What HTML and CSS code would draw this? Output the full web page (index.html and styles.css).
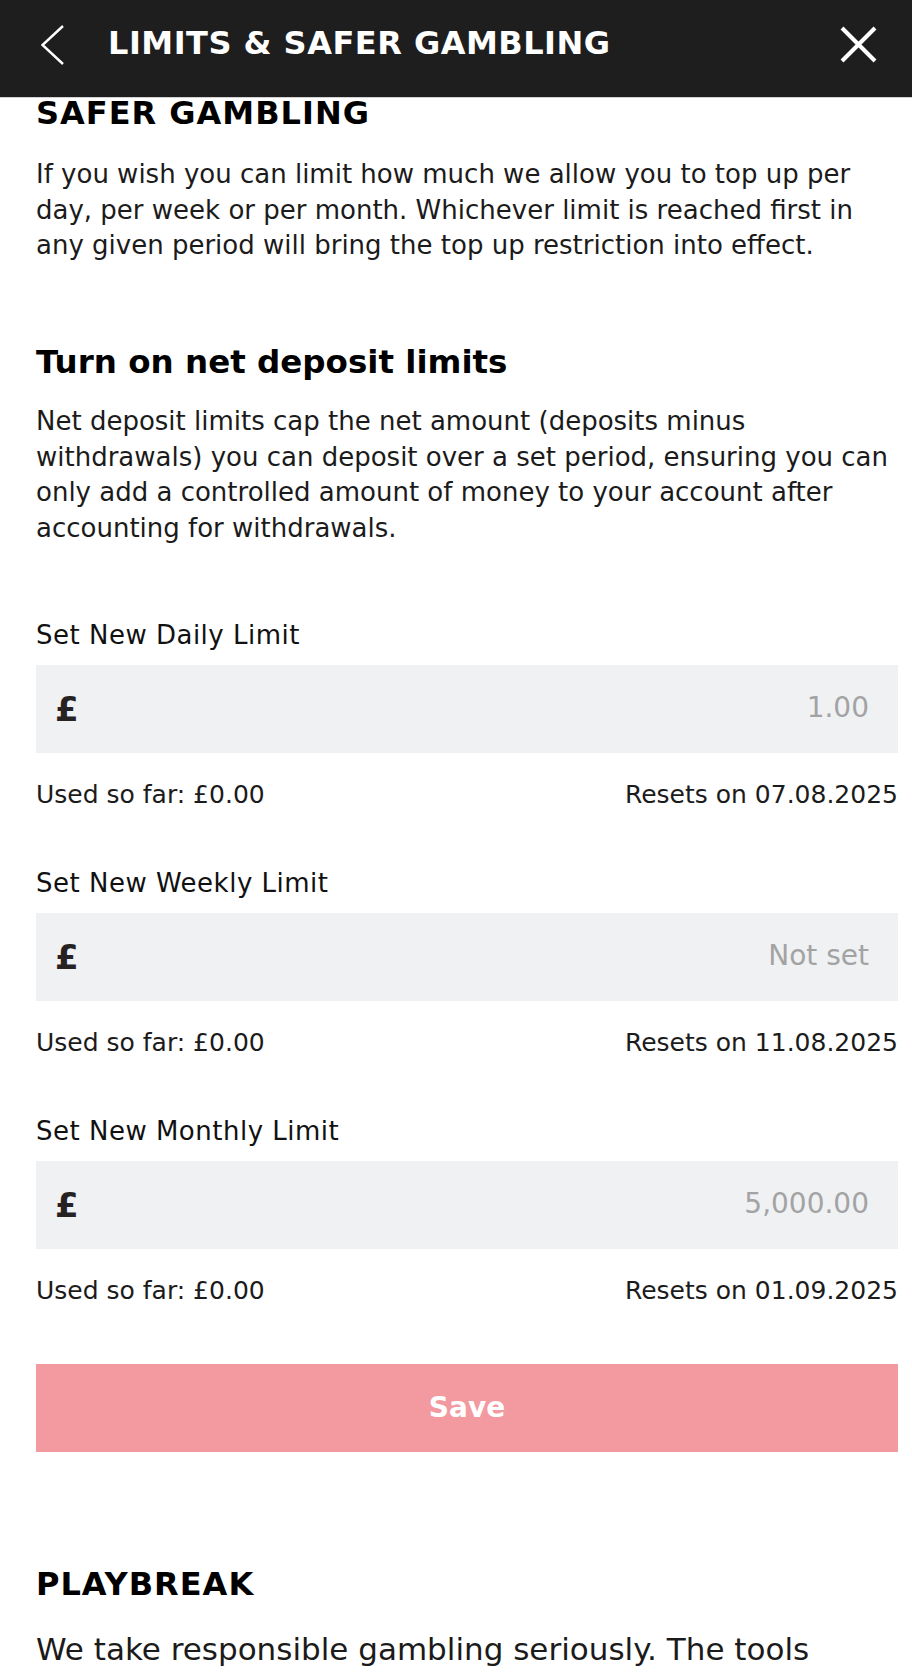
FILE: index.html
```html
<!DOCTYPE html>
<html lang="en">
<head>
    <meta charset="UTF-8">
    <meta name="viewport" content="width=device-width, initial-scale=1.0">
    <title>Limits &amp; Safer Gambling</title>
    <link rel="stylesheet" href="styles.css">
</head>
<body>

<header class="topbar">
    <a class="back" href="#" aria-label="Back">
        <svg width="23" height="40" viewBox="0 0 23 40">
            <polyline points="22,1 1.5,20 22,39" fill="none" stroke="#fff" stroke-width="2.4"/>
        </svg>
    </a>
    <h1>LIMITS &amp; SAFER GAMBLING</h1>
    <a class="close" href="#" aria-label="Close">
        <svg width="37" height="37" viewBox="0 0 37 37">
            <line x1="2" y1="2" x2="35" y2="35" stroke="#fff" stroke-width="4"/>
            <line x1="35" y1="2" x2="2" y2="35" stroke="#fff" stroke-width="4"/>
        </svg>
    </a>
</header>

<main class="content">
    <h2 class="section-title">SAFER GAMBLING</h2>
    <p class="intro">If you wish you can limit how much we allow you to top up per day, per week or per month. Whichever limit is reached first in any given period will bring the top up restriction into effect.</p>

    <h3 class="sub-title">Turn on net deposit limits</h3>
    <p class="desc">Net deposit limits cap the net amount (deposits minus withdrawals) you can deposit over a set period, ensuring you can only add a controlled amount of money to your account after accounting for withdrawals.</p>

    <div class="limit">
        <label class="limit-label" for="daily">Set New Daily Limit</label>
        <div class="amount-field">
            <span class="currency">£</span>
            <input class="amount" id="daily" type="text" placeholder="1.00">
        </div>
        <div class="limit-info">
            <span>Used so far: £0.00</span>
            <span>Resets on 07.08.2025</span>
        </div>
    </div>

    <div class="limit">
        <label class="limit-label" for="weekly">Set New Weekly Limit</label>
        <div class="amount-field">
            <span class="currency">£</span>
            <input class="amount" id="weekly" type="text" placeholder="Not set">
        </div>
        <div class="limit-info">
            <span>Used so far: £0.00</span>
            <span>Resets on 11.08.2025</span>
        </div>
    </div>

    <div class="limit">
        <label class="limit-label" for="monthly">Set New Monthly Limit</label>
        <div class="amount-field">
            <span class="currency">£</span>
            <input class="amount" id="monthly" type="text" placeholder="5,000.00">
        </div>
        <div class="limit-info">
            <span>Used so far: £0.00</span>
            <span>Resets on 01.09.2025</span>
        </div>
    </div>

    <button class="btn-save" type="button" disabled>Save</button>

    <h2 class="section-title playbreak">PLAYBREAK</h2>
    <p class="outro">We take responsible gambling seriously. The tools</p>
</main>

</body>
</html>
```

FILE: styles.css
```css
/* Limits & safer gambling page */
body {
    margin: 0;
    font-family: "DejaVu Sans", sans-serif;
    background-color: #fff;
    color: #1b1b1b;
}

.topbar {
    box-sizing: border-box;
    height: 98px;
    display: flex;
    align-items: flex-start;
    padding: 23px 35px 0 41px;
    background-color: #1e1e1e;
    border-bottom: 1px solid #d2d2d2;
}
.topbar .back {
    display: block;
    margin-top: 2px;
    line-height: 0;
}
.topbar h1 {
    margin: 0 0 0 44px;
    font-size: 32px;
    line-height: 40px;
    font-weight: bold;
    letter-spacing: 0.5px;
    color: #fff;
}
.topbar .close {
    display: block;
    margin: 3px 0 0 auto;
    line-height: 0;
}

.content {
    padding: 0 14px 0 36px;
}

.section-title {
    margin: 0;
    font-size: 32px;
    line-height: 30px;
    font-weight: bold;
    letter-spacing: 1px;
    color: #000;
}
.intro, .desc {
    margin: 0;
    font-size: 26px;
    line-height: 35.5px;
}
.intro {
    margin-top: 29px;
}
.sub-title {
    margin: 78px 0 0;
    font-size: 32.5px;
    line-height: 40px;
    font-weight: bold;
    color: #000;
}
.desc {
    margin-top: 22.5px;
}

.limit {
    margin-bottom: 58px;
}
.limit:first-of-type {
    margin-top: 74px;
}
.limit-label {
    display: block;
    font-size: 26px;
    line-height: 30px;
    letter-spacing: 0.5px;
    color: #111;
}
.amount-field {
    display: flex;
    align-items: center;
    height: 88px;
    margin-top: 15px;
    padding: 0 29px 0 19px;
    background-color: #f0f1f3;
}
.currency {
    font-size: 34px;
    font-weight: bold;
    color: #262223;
}
.amount {
    flex: 1;
    min-width: 0;
    border: none;
    outline: none;
    background: transparent;
    padding: 0 0 3px;
    text-align: right;
    font-family: "DejaVu Sans", sans-serif;
    font-size: 28px;
    color: #1b1b1b;
}
.amount::placeholder {
    color: #a3a3a3;
}
.limit-info {
    display: flex;
    justify-content: space-between;
    margin-top: 27px;
    font-size: 25px;
    line-height: 30px;
    color: #1b1b1b;
}

.btn-save {
    display: flex;
    align-items: center;
    justify-content: center;
    width: 100%;
    height: 88px;
    margin-top: 1px;
    border: none;
    background-color: #f29aa0;
    font-family: "DejaVu Sans", sans-serif;
    font-size: 28px;
    line-height: 30px;
    font-weight: bold;
    color: #fff;
}

.playbreak {
    margin-top: 117px;
}
.outro {
    margin: 29px 0 0;
    font-size: 31px;
    line-height: 42px;
}
```
